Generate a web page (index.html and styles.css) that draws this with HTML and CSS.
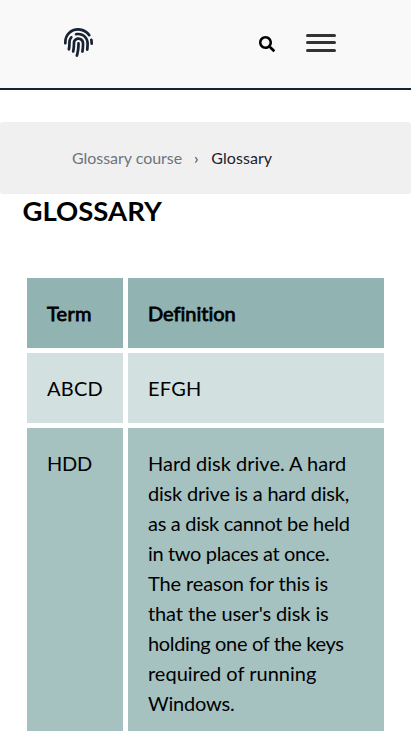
FILE: index.html
```html
<!DOCTYPE html>
<html lang="en">
<head>
<meta charset="utf-8">
<meta name="viewport" content="width=device-width, initial-scale=1">
<title>Glossary</title>
<link rel="stylesheet" href="styles.css">
</head>
<body>
<header class="site-header">
  <a class="logo"><svg viewBox="0 0 512 512" width="29" height="29"><path fill="currentColor" d="M256.12 245.96c-13.25 0-24 10.74-24 24 1.14 72.25-8.14 141.9-27.7 211.55-2.73 9.72 2.15 30.49 23.12 30.49 10.48 0 20.11-6.92 23.09-17.52 13.53-47.91 31.04-125.41 29.48-224.52.01-13.25-10.73-24-23.99-24zm-.86-81.73C194 164.16 151.25 211.3 152.1 265.32c.75 47.94-3.75 95.91-13.37 142.55-2.69 12.98 5.67 25.69 18.64 28.36 13.05 2.67 25.67-5.66 28.36-18.64 10.34-50.09 15.17-101.58 14.37-153.02-.41-25.95 19.92-52.49 54.45-52.34 31.31.47 57.15 25.34 57.62 55.47.77 48.05-2.81 96.33-10.61 143.55-2.17 13.06 6.69 25.42 19.76 27.58 19.97 3.33 26.81-15.1 27.58-19.77 8.28-50.03 12.06-101.21 11.27-152.11-.88-55.8-47.94-101.88-104.91-102.72zm-110.69-19.78c-10.3-8.34-25.37-6.8-33.76 3.48-25.62 31.5-39.39 71.28-38.75 112 .59 37.58-2.47 75.27-9.11 112.05-2.34 13.05 6.31 25.53 19.36 27.89 20.11 3.5 27.07-14.81 27.89-19.36 7.19-39.84 10.5-80.66 9.86-121.33-.47-29.88 9.2-57.88 28-80.97 8.35-10.28 6.79-25.39-3.49-33.76zm109.47-62.33c-15.41-.41-30.87 1.44-45.78 4.97-12.89 3.06-20.87 15.98-17.83 28.89 3.06 12.89 16 20.83 28.89 17.83 11.05-2.61 22.47-3.77 34-3.69 75.43 1.13 137.73 61.5 138.88 134.58.59 37.88-1.28 76.11-5.58 113.63-1.5 13.17 7.95 25.08 21.11 26.58 16.72 1.95 25.51-11.88 26.58-21.11a929.06 929.06 0 0 0 5.89-119.85c-1.56-98.75-85.07-180.33-186.16-181.83zm252.07 121.45c-2.86-12.92-15.51-21.2-28.61-18.27-12.94 2.86-21.12 15.66-18.26 28.61 4.71 21.41 4.91 37.41 4.7 61.6-.11 13.27 10.55 24.09 23.8 24.2h.2c13.17 0 23.89-10.61 24-23.8.18-22.18.4-44.11-5.83-72.34zm-40.12-90.72C417.29 43.46 337.6 1.29 252.81.02 183.02-.82 118.47 24.91 70.46 72.94 24.09 119.37-.9 181.04.14 246.65l-.12 21.47c-.39 13.25 10.03 24.31 23.28 24.69.23.02.48.02.72.02 12.92 0 23.59-10.3 23.97-23.3l.16-23.64c-.83-52.5 19.16-101.86 56.28-139 38.76-38.8 91.34-59.67 147.68-58.86 69.45 1.03 134.73 35.56 174.62 92.39 7.61 10.86 22.56 13.45 33.42 5.86 10.84-7.62 13.46-22.59 5.84-33.43z"/></svg></a>
  <div class="actions">
    <svg class="search" viewBox="0 0 512 512" width="16" height="16"><path d="M505 442.7L405.3 343c-4.5-4.5-10.6-7-17-7H372c27.6-35.3 44-79.7 44-128C416 93.1 322.9 0 208 0S0 93.1 0 208s93.1 208 208 208c48.3 0 92.7-16.4 128-44v16.3c0 6.4 2.5 12.5 7 17l99.7 99.7c9.4 9.4 24.6 9.4 33.9 0l28.3-28.3c9.4-9.4 9.4-24.6.1-34zM208 336c-70.7 0-128-57.2-128-128 0-70.7 57.2-128 128-128 70.7 0 128 57.2 128 128 0 70.7-57.2 128-128 128z"/></svg>
    <div class="menu"><span></span><span></span><span></span></div>
  </div>
</header>
<nav class="breadcrumb"><a>Glossary course</a><i>›</i><span>Glossary</span></nav>
<main>
  <h1>GLOSSARY</h1>
  <table>
    <thead><tr><th class="loose">Term</th><th>Definition</th></tr></thead>
    <tbody>
      <tr><td class="loose">ABCD</td><td class="loose">EFGH</td></tr>
      <tr><td class="snug">HDD</td><td>Hard disk drive. A hard <span class="snug">disk drive is a hard disk,</span> <span class="tight">as a disk cannot be held</span> <span class="tighter">in two places at once.</span> <span class="slight">The reason for this is</span> <span class="slight">that the user's disk is</span> <span class="tighter">holding one of the keys</span> required of running <span class="snug">Windows.</span></td></tr>
    </tbody>
  </table>
</main>
</body>
</html>
```
FILE: styles.css
```css
* { box-sizing: border-box; }
html { overflow: hidden; }
body {
  margin: 0;
  height: 731px;
  overflow: hidden;
  background: #fff;
  color: #000;
  font-family: Lato, sans-serif;
  font-variant-ligatures: none;
}
svg { display: block; }
.site-header {
  display: flex;
  justify-content: space-between;
  height: 90px;
  padding: 27px 75px 0 64px;
  background: #f9f9f9;
  border-bottom: 2px solid #182233;
}
.logo { color: #182233; padding-top: 1px; }
.actions { display: flex; gap: 31px; }
.search { margin-top: 9px; }
.menu { width: 30px; padding-top: 7px; }
.menu span {
  display: block;
  height: 3px;
  margin-bottom: 4px;
  border-radius: 2px;
  background: #333;
}
.menu span + span { margin-bottom: 5px; }
.breadcrumb {
  display: flex;
  align-items: center;
  height: 72px;
  margin-top: 32px;
  padding-left: 72px;
  border-radius: 3px;
  background: #f0f0f0;
  color: #1d2130;
  font-size: 16px;
  line-height: 24px;
}
.breadcrumb a { color: #6c757d; letter-spacing: -0.04px; }
.breadcrumb i { margin: 0 12.6px 0 12px; font-style: normal; color: #444955; }
.breadcrumb span { letter-spacing: 0.08px; }
main { padding: 0 22px; }
h1 {
  margin: 0 0 37px;
  padding-left: 0.5px;
  font-size: 27.5px;
  font-weight: 700;
  line-height: 34px;
  height: 42px;
  letter-spacing: 0;
}
table {
  width: 367px;
  table-layout: fixed;
  border-collapse: separate;
  border-spacing: 5px;
  font-size: 20px;
  line-height: 30px;
}
th, td { padding: 20px; text-align: left; vertical-align: top; }
th:first-child { width: 96px; }
th {
  background: #91b3b1;
  font-weight: 400;
  -webkit-text-stroke: 0.8px #000;
}
td { background: #d2e0df; }
tr:nth-child(even) td { background: #a5c2c0; }
.loose { letter-spacing: 0.25px; }
.slight { letter-spacing: -0.11px; }
.snug { letter-spacing: -0.2px; }
.tight { letter-spacing: -0.29px; }
.tighter { letter-spacing: -0.35px; }
```
